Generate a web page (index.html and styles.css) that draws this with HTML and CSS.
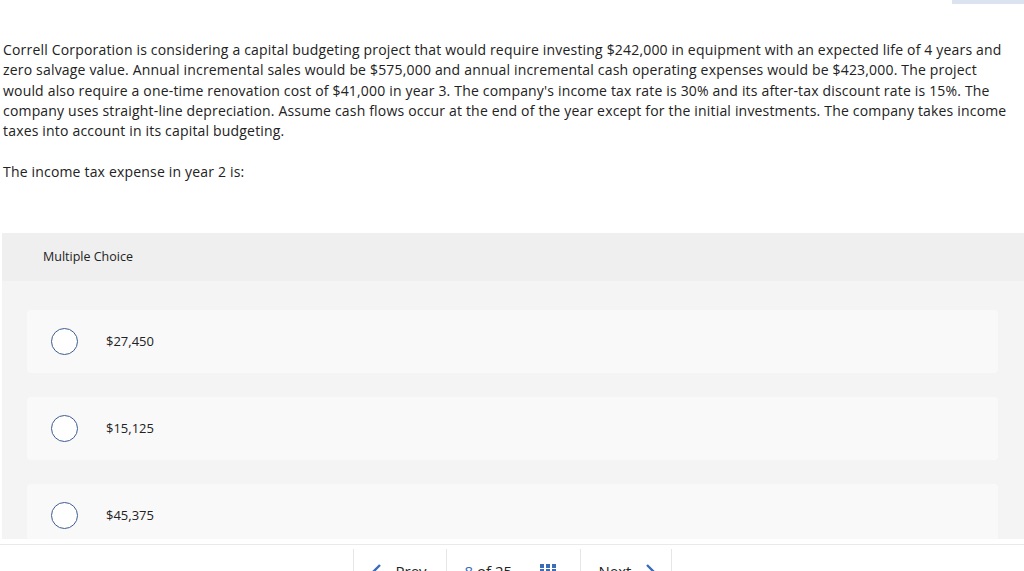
FILE: index.html
```html
<!DOCTYPE html>
<html lang="en">
<head>
<meta charset="utf-8">
<title>Question</title>
<link rel="stylesheet" href="styles.css">
</head>
<body>
<div class="topbar"><div class="topbar-tab"></div></div>
<main class="question">
  <p class="prompt">Correll Corporation is considering a capital budgeting project that would require investing $242,000 in equipment with an expected life of 4 years and zero salvage value. Annual incremental sales would be $575,000 and annual incremental cash operating expenses would be $423,000. The project would also require a one-time renovation cost of $41,000 in year 3. The company's income tax rate is 30% and its after-tax discount rate is 15%. The company uses straight-line depreciation. Assume cash flows occur at the end of the year except for the initial investments. The company takes income taxes into account in its capital budgeting.</p>
  <p class="prompt">The income tax expense in year 2 is:</p>
</main>
<section class="panel">
  <header class="panel-head">Multiple Choice</header>
  <div class="panel-body">
    <label class="choice"><span class="radio"></span><span class="choice-text">$27,450</span></label>
    <label class="choice"><span class="radio"></span><span class="choice-text">$15,125</span></label>
    <label class="choice"><span class="radio"></span><span class="choice-text">$45,375</span></label>
  </div>
</section>
<footer class="footer">
  <nav class="pager">
    <div class="pager-item">
      <svg class="chev" width="10" height="14" viewBox="0 0 10 14"><path d="M8 1 L2 7 L8 13" fill="none" stroke="#3b6cb7" stroke-width="2.4"/></svg>
      <span>Prev</span>
    </div>
    <div class="pager-item">
      <span><b class="num">8</b> of 25</span>
      <svg class="grid" width="16" height="14" viewBox="0 0 16 14"><g fill="#3b6cb7"><rect x="0" y="0" width="4" height="4"/><rect x="6" y="0" width="4" height="4"/><rect x="12" y="0" width="4" height="4"/><rect x="0" y="5" width="4" height="4"/><rect x="6" y="5" width="4" height="4"/><rect x="12" y="5" width="4" height="4"/><rect x="0" y="10" width="4" height="4"/><rect x="6" y="10" width="4" height="4"/><rect x="12" y="10" width="4" height="4"/></g></svg>
    </div>
    <div class="pager-item">
      <span>Next</span>
      <svg class="chev" width="10" height="14" viewBox="0 0 10 14"><path d="M2 1 L8 7 L2 13" fill="none" stroke="#3b6cb7" stroke-width="2.4"/></svg>
    </div>
  </nav>
</footer>
</body>
</html>
```
FILE: styles.css
```css
html, body {
  margin: 0;
  padding: 0;
  background: #ffffff;
  overflow: hidden;
}
body {
  font-family: "Open Sans", "Liberation Sans", sans-serif;
  color: #222222;
  width: 1024px;
  height: 571px;
}
.topbar {
  height: 4px;
  display: flex;
  justify-content: flex-end;
}
.topbar-tab {
  width: 72px;
  height: 4px;
  background: #dae3ef;
}
.question {
  padding: 36px 14px 0 3px;
}
.prompt {
  margin: 0 0 21px 0;
  font-size: 14px;
  line-height: 20.25px;
  letter-spacing: 0.18px;
}
.prompt:last-child {
  margin-bottom: 0;
}
.panel {
  margin: 50px 0 0 2px;
  height: 306px;
  overflow: hidden;
  background: #f4f4f4;
}
.panel-head {
  height: 48px;
  display: flex;
  align-items: center;
  padding-left: 41px;
  background: #efefef;
  font-size: 12.5px;
  color: #222222;
}
.panel-body {
  padding: 29px 26px 0 25px;
  display: flex;
  flex-direction: column;
  gap: 24px;
}
.choice {
  height: 63px;
  display: flex;
  align-items: center;
  background: #f9f9f9;
  border-radius: 4px;
  padding-left: 24px;
}
.radio {
  width: 25px;
  height: 25px;
  border: 1px solid #3d5e8f;
  border-radius: 50%;
  background: #ffffff;
  flex: none;
}
.choice-text {
  margin-left: 28px;
  font-size: 13px;
  color: #222222;
}
.footer {
  margin-top: 5px;
  border-top: 1px solid #e9e9e9;
  height: 30px;
}
.pager {
  display: flex;
  justify-content: center;
  padding-top: 4px;
}
.pager-item {
  display: flex;
  align-items: flex-start;
  gap: 14px;
  height: 30px;
  padding: 12px 18px 0;
  box-sizing: border-box;
  border-left: 1px solid #e6e6e6;
  font-size: 15px;
  color: #222222;
}
.pager-item:last-child {
  border-right: 1px solid #e6e6e6;
}
.pager-item:nth-child(1) { width: 93px; padding-left: 18px; }
.pager-item:nth-child(2) { width: 134px; padding-left: 18px; gap: 28px; }
.pager-item:nth-child(3) { width: 92px; padding-left: 18px; }
.num {
  font-weight: normal;
  color: #3b6cb7;
}
.chev, .grid {
  margin-top: 3px;
  flex: none;
}
```
